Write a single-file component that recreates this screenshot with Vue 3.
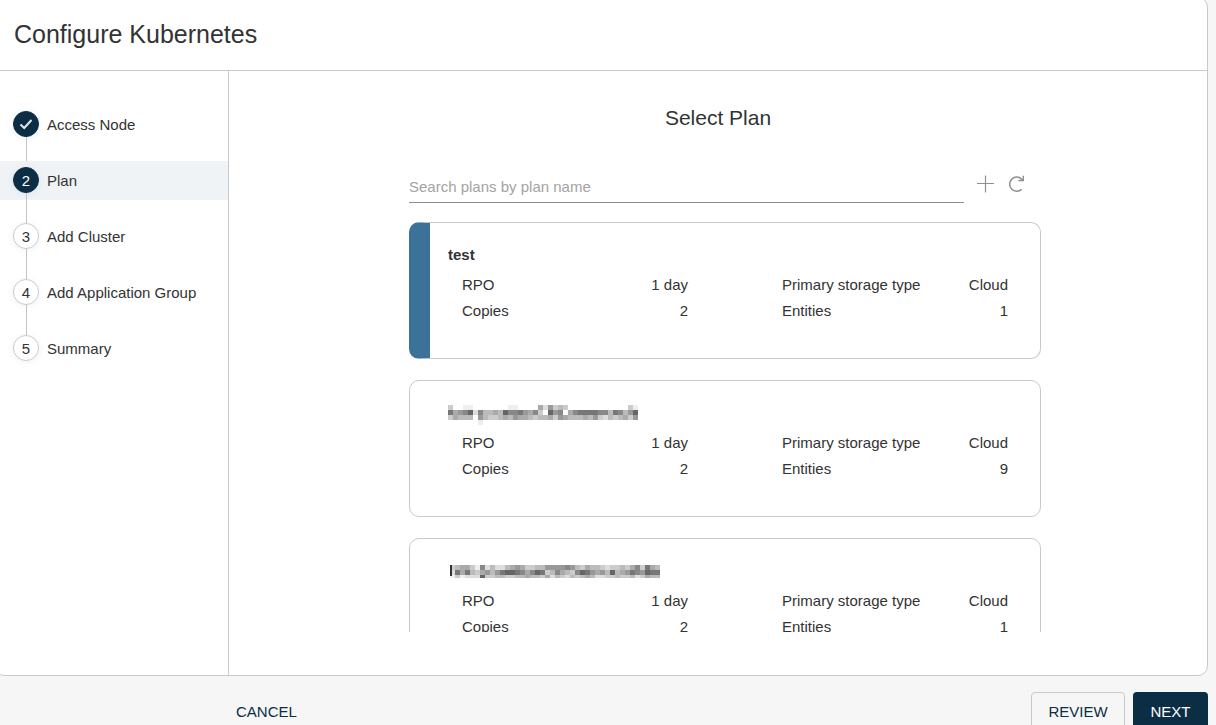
<script setup>
import { ref } from 'vue'

const search = ref('')

const steps = [
  { n: 1, label: 'Access Node', done: true },
  { n: 2, label: 'Plan', current: true },
  { n: 3, label: 'Add Cluster' },
  { n: 4, label: 'Add Application Group' },
  { n: 5, label: 'Summary' },
]

// Redacted names are mosaics: one hex grey level per 5px cell, "." is empty.
const mosaics = {
  first: {
    x: 0,
    y: 2,
    width: 190,
    height: 20,
    rows: [
      'c..ee.......ee....ad9cbc............ce',
      '7a986d8bbab68879a8cf698fa8777788b78b96',
      'cabbbf9bccbab9aabcbbac9abbbab9cdbcbac9',
      '......e...............................',
    ],
  },
  second: {
    x: 2,
    y: 4,
    width: 210,
    height: 13,
    bar: true,
    rows: [
      'cbaace8dbddba9accbb999989bcabbcdccbca8c7ab',
      'd7a7bca9b976678a867cb8abc8679a9b6ba9789677',
      'eceddd6ccbbccbbabbcadbcdbcbabddccbccbdcabb',
    ],
  },
}

const cells = (mosaic) =>
  mosaic.rows.flatMap((row, y) =>
    [...row].flatMap((level, x) =>
      level === '.' ? [] : [{ x: x * 5, y: y * 5, fill: `#${level.repeat(3)}` }]
    )
  )

const plans = [
  { id: 1, name: 'test', selected: true, entities: 1, copies: 2 },
  { id: 2, mosaic: mosaics.first, entities: 9, copies: 2 },
  { id: 3, mosaic: mosaics.second, entities: 1, copies: 2 },
]
</script>

<template>
  <div class="wizard">
    <div class="panel">
      <header class="header">
        <h1>Configure Kubernetes</h1>
      </header>
      <div class="body">
        <nav class="sidebar" aria-label="Steps">
          <ol class="steps">
            <li
              v-for="step in steps"
              :key="step.n"
              class="step"
              :class="{ done: step.done, current: step.current }"
              :aria-current="step.current ? 'step' : undefined"
            >
              <span class="bullet">
                <svg v-if="step.done" width="16" height="16" viewBox="0 0 16 16" aria-hidden="true">
                  <path d="M2.5 8.5 L6.2 12 L13.5 4" fill="none" stroke="#e4e8ea" stroke-width="2" />
                </svg>
                <template v-else>{{ step.n }}</template>
              </span>
              <span>{{ step.label }}</span>
            </li>
          </ol>
        </nav>
        <main class="main">
          <h2>Select Plan</h2>
          <div class="content">
            <div class="toolbar">
              <input
                v-model="search"
                class="search"
                type="text"
                placeholder="Search plans by plan name"
                aria-label="Search plans by plan name"
              />
              <button class="icon-button" type="button" aria-label="Add plan">
                <svg width="18" height="18" viewBox="0 0 18 18" aria-hidden="true">
                  <path d="M8.5 0.5 V17.5 M0 8.5 H17" fill="none" stroke="#8f8f8f" stroke-width="1.2" />
                </svg>
              </button>
              <button class="icon-button" type="button" aria-label="Refresh">
                <svg width="18" height="18" viewBox="0 0 18 18" aria-hidden="true">
                  <path
                    d="M13.6 14.4 A7.1 7.1 0 1 1 13.8 4.2 L15 5.4"
                    fill="none"
                    stroke="#8f8f8f"
                    stroke-width="1.5"
                  />
                  <path d="M15.3 0.8 V5.5 H10.4" fill="none" stroke="#8f8f8f" stroke-width="1.4" />
                </svg>
              </button>
            </div>
            <div class="plans">
              <article
                v-for="plan in plans"
                :key="plan.id"
                class="plan"
                :class="{ selected: plan.selected }"
              >
                <h3>
                  <template v-if="plan.name">{{ plan.name }}</template>
                  <svg
                    v-else
                    width="220"
                    height="24"
                    viewBox="0 0 220 24"
                    shape-rendering="crispEdges"
                    role="img"
                    aria-label="Hidden plan name"
                  >
                    <svg
                      :x="plan.mosaic.x"
                      :y="plan.mosaic.y"
                      :width="plan.mosaic.width"
                      :height="plan.mosaic.height"
                    >
                      <rect
                        v-for="(cell, i) in cells(plan.mosaic)"
                        :key="i"
                        :x="cell.x"
                        :y="cell.y"
                        width="5"
                        height="5"
                        :fill="cell.fill"
                      />
                      <rect v-if="plan.mosaic.bar" width="2" height="11" fill="#333" />
                    </svg>
                  </svg>
                </h3>
                <dl class="facts">
                  <div><dt>RPO</dt><dd>1 day</dd></div>
                  <div><dt>Primary storage type</dt><dd>Cloud</dd></div>
                  <div><dt>Copies</dt><dd>{{ plan.copies }}</dd></div>
                  <div><dt>Entities</dt><dd>{{ plan.entities }}</dd></div>
                </dl>
              </article>
            </div>
          </div>
        </main>
      </div>
    </div>
    <footer class="footer">
      <button class="action cancel" type="button">CANCEL</button>
      <button class="action review" type="button">REVIEW</button>
      <button class="action next" type="button">NEXT</button>
    </footer>
  </div>
</template>

<style>
body {
  margin: 0;
  background: #f6f6f6;
}
</style>

<style scoped>
.wizard {
  box-sizing: border-box;
  height: 100vh;
  overflow: hidden;
  display: flex;
  flex-direction: column;
  font-family: 'Liberation Sans', Arial, sans-serif;
  font-size: 15px;
  color: #333;
  background: #f6f6f6;
}
h1,
h2,
h3,
dl,
dd,
ol {
  margin: 0;
  padding: 0;
  font-weight: normal;
}
.panel {
  flex: 1;
  min-height: 0;
  display: flex;
  flex-direction: column;
  margin: -3px 8px 0 -6px;
  border: 1px solid #c9c9c9;
  border-radius: 10px;
  background: #fff;
}
.header {
  padding: 22px 19px 21px;
  border-bottom: 1px solid #c9c9c9;
}
h1 {
  font-size: 25px;
  line-height: 29px;
}
.body {
  flex: 1;
  min-height: 0;
  display: flex;
}
.sidebar {
  box-sizing: border-box;
  flex: none;
  width: 234px;
  padding-top: 34px;
  border-right: 1px solid #c9c9c9;
}
.steps {
  display: flex;
  flex-direction: column;
  gap: 17px;
  list-style: none;
}
.step {
  box-sizing: border-box;
  position: relative;
  display: flex;
  align-items: center;
  gap: 8px;
  height: 39px;
  padding: 0 0 1px 18px;
}
.step.current {
  background: #eff3f6;
}
.step:not(:last-child)::after {
  content: '';
  position: absolute;
  left: 31px;
  top: 32px;
  height: 30px;
  border-left: 1px solid #c4c4c4;
}
.bullet {
  box-sizing: border-box;
  display: flex;
  align-items: center;
  justify-content: center;
  width: 26px;
  height: 26px;
  border: 1px solid #ccc;
  border-radius: 50%;
  background: #fff;
  box-shadow: 0 1px 6px rgba(60, 110, 160, 0.1);
}
.done .bullet,
.current .bullet {
  border-color: #0b2e44;
  background: #0b2e44;
  color: #fff;
}
.main {
  flex: 1;
  min-width: 0;
  display: flex;
  flex-direction: column;
  align-items: center;
  padding: 35px 24px 43px;
}
h2 {
  font-size: 21px;
  line-height: 24px;
}
.content {
  flex: 1;
  min-height: 0;
  width: 100%;
  max-width: 618px;
  display: flex;
  flex-direction: column;
}
.toolbar {
  display: flex;
  align-items: center;
  gap: 13px;
  margin-top: 40px;
  padding-right: 1px;
}
.search {
  flex: 1;
  min-width: 0;
  height: 33px;
  box-sizing: border-box;
  padding: 0;
  border: 0;
  border-bottom: 1px solid #8c8c8c;
  background: transparent;
  color: inherit;
  font: inherit;
  outline: none;
}
.search::placeholder {
  color: #a3a3a3;
  opacity: 1;
}
.icon-button {
  display: flex;
  padding: 0 0 6px;
  border: 0;
  background: none;
}
.plans {
  flex: 1;
  min-height: 0;
  overflow-y: auto;
  scrollbar-width: none;
  display: flex;
  flex-direction: column;
  gap: 21px;
  margin: 19px -14px 0 0;
}
.plan {
  flex: none;
  border: 1px solid #c9c9c9;
  border-radius: 10px;
  padding: 22px 32px 34px 38px;
}
.plan.selected {
  border-left: 21px solid #3c7199;
  padding-left: 18px;
}
h3 {
  display: flex;
  height: 20px;
  line-height: 20px;
  font-size: 15px;
  font-weight: bold;
}
.facts {
  display: grid;
  grid-template-columns: 1fr 1fr;
  column-gap: 94px;
  margin: 7px 0 0 14px;
  line-height: 26px;
}
.facts div {
  display: flex;
  justify-content: space-between;
}
.footer {
  flex: none;
  box-sizing: border-box;
  height: 49px;
  display: flex;
  align-items: flex-start;
  gap: 8px;
  padding: 16px 8px 0 235px;
}
.action {
  flex: none;
  box-sizing: border-box;
  height: 38px;
  padding: 0 16px;
  border: 1px solid transparent;
  border-radius: 4px;
  background: none;
  color: #0b2e44;
  font: inherit;
}
.cancel {
  margin-right: auto;
  padding: 0;
}
.review {
  min-width: 94px;
  border-color: #c9c9c9;
}
.next {
  min-width: 75px;
  background: #0b2e44;
  color: #fff;
}
</style>
